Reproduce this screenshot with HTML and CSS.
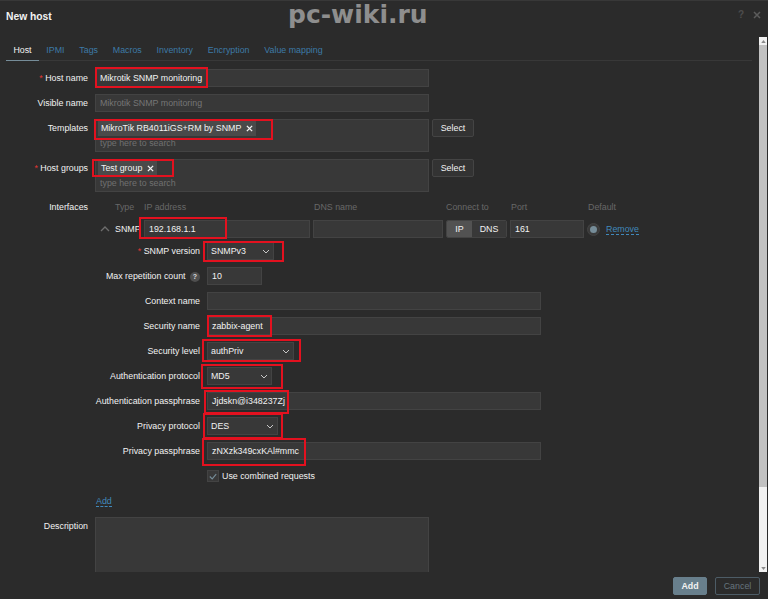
FILE: index.html
```html
<!DOCTYPE html>
<html lang="en">
<head>
<meta charset="utf-8">
<title>New host</title>
<link rel="stylesheet" href="styles.css">
</head>
<body>
<div class="dialog">
  <header class="dialog-head">
    <h1 class="title">New host</h1>
    <div class="head-icons">
      <span class="help">?</span>
      <svg class="close" viewBox="0 0 8 8" width="8" height="8"><path d="M1 1l6 6M7 1L1 7"/></svg>
    </div>
  </header>
  <div class="watermark">pc-wiki.ru</div>

  <div class="middle">
    <main class="scroll-view">
      <nav class="tabs">
        <a class="tab active">Host</a>
        <a class="tab">IPMI</a>
        <a class="tab">Tags</a>
        <a class="tab">Macros</a>
        <a class="tab">Inventory</a>
        <a class="tab">Encryption</a>
        <a class="tab">Value mapping</a>
      </nav>

      <div class="form">
        <label class="label"><i class="req">*</i> Host name</label>
        <div class="value"><div class="input w-main">Mikrotik SNMP monitoring</div></div>

        <label class="label">Visible name</label>
        <div class="value"><div class="input w-main muted">Mikrotik SNMP monitoring</div></div>

        <label class="label">Templates</label>
        <div class="value row-select">
          <div class="multi">
            <span class="chip">MikroTik RB4011iGS+RM by SNMP
              <svg class="chip-x" viewBox="0 0 8 8" width="7" height="7"><path d="M1 1l6 6M7 1L1 7"/></svg>
            </span>
            <div class="placeholder">type here to search</div>
          </div>
          <button class="btn-select">Select</button>
        </div>

        <label class="label"><i class="req">*</i> Host groups</label>
        <div class="value row-select">
          <div class="multi">
            <span class="chip">Test group
              <svg class="chip-x" viewBox="0 0 8 8" width="7" height="7"><path d="M1 1l6 6M7 1L1 7"/></svg>
            </span>
            <div class="placeholder">type here to search</div>
          </div>
          <button class="btn-select">Select</button>
        </div>

        <label class="label label-interfaces">Interfaces</label>
        <div class="value interfaces">
          <div class="if-grid if-head">
            <span></span>
            <span>Type</span>
            <span>IP address</span>
            <span class="nudge">DNS name</span>
            <span>Connect to</span>
            <span class="nudge">Port</span>
            <span class="nudge">Default</span>
          </div>
          <div class="if-grid if-row">
            <svg class="chev-up" viewBox="0 0 10 6" width="10" height="6"><path d="M1 5l4-4 4 4"/></svg>
            <span class="if-type">SNMP</span>
            <div class="input">192.168.1.1</div>
            <div class="input"></div>
            <div class="toggle"><span class="toggle-on">IP</span><span class="toggle-off">DNS</span></div>
            <div class="input">161</div>
            <div class="default-cell">
              <span class="radio"><span class="radio-dot"></span></span>
              <a class="link">Remove</a>
            </div>
          </div>

          <div class="subform">
            <label class="label"><i class="req">*</i> SNMP version</label>
            <div class="select w-67">SNMPv3<svg class="chev" viewBox="0 0 8 5" width="8" height="5"><path d="M1 1l3 3 3-3"/></svg></div>

            <label class="label">Max repetition count <span class="hint">?</span></label>
            <div class="input w-55">10</div>

            <label class="label">Context name</label>
            <div class="input w-wide"></div>

            <label class="label">Security name</label>
            <div class="input w-wide">zabbix-agent</div>

            <label class="label">Security level</label>
            <div class="select w-87">authPriv<svg class="chev" viewBox="0 0 8 5" width="8" height="5"><path d="M1 1l3 3 3-3"/></svg></div>

            <label class="label">Authentication protocol</label>
            <div class="select w-65">MD5<svg class="chev" viewBox="0 0 8 5" width="8" height="5"><path d="M1 1l3 3 3-3"/></svg></div>

            <label class="label">Authentication passphrase</label>
            <div class="input w-wide">Jjdskn@i348237Zj</div>

            <label class="label">Privacy protocol</label>
            <div class="select w-71">DES<svg class="chev" viewBox="0 0 8 5" width="8" height="5"><path d="M1 1l3 3 3-3"/></svg></div>

            <label class="label">Privacy passphrase</label>
            <div class="input w-wide">zNXzk349cxKAl#mmc</div>

            <span></span>
            <div class="check-row">
              <span class="check"><svg viewBox="0 0 10 8" width="8" height="7"><path d="M1 4l3 3 5-6"/></svg></span>
              <span>Use combined requests</span>
            </div>
          </div>

          <div class="add-row"><a class="link">Add</a></div>
        </div>

        <label class="label">Description</label>
        <div class="value"><div class="textarea w-main"></div></div>
      </div>
    </main>

    <div class="scrollbar">
      <div class="sb-arrow"><svg viewBox="0 0 6 4" width="5" height="3"><path class="sb-tri" d="M3 0l3 4H0z"/></svg></div>
      <div class="sb-thumb"></div>
      <div class="sb-track"></div>
      <div class="sb-arrow"><svg viewBox="0 0 6 4" width="5" height="3"><path class="sb-tri" d="M0 0h6L3 4z"/></svg></div>
    </div>
  </div>

  <footer class="dialog-foot">
    <button class="btn-add">Add</button>
    <button class="btn-cancel">Cancel</button>
  </footer>

  <div class="mark m-hostname"></div>
  <div class="mark m-templates"></div>
  <div class="mark m-groups"></div>
  <div class="mark m-ip"></div>
  <div class="mark m-version"></div>
  <div class="mark m-secname"></div>
  <div class="mark m-seclevel"></div>
  <div class="mark m-authproto"></div>
  <div class="mark m-authpass"></div>
  <div class="mark m-privproto"></div>
  <div class="mark m-privpass"></div>
</div>
</body>
</html>
```

FILE: styles.css
```css
* { box-sizing: border-box; }
html, body { margin: 0; padding: 0; background: #2b2b2b; }
body { font: 8.85px/18px "Liberation Sans", Arial, sans-serif; color: #f2f2f2; }

.dialog {
  position: relative;
  width: 768px;
  height: 599px;
  overflow: hidden;
  display: flex;
  flex-direction: column;
  background: #2b2b2b;
  border-top: 1px solid #383838;
}

.dialog-head {
  flex: 0 0 36px;
  display: flex;
  justify-content: space-between;
  padding: 6px 7px 0 6px;
}
.title { margin: 1px 0 0; font-size: 10.3px; line-height: 18px; font-weight: bold; color: #f2f2f2; }
.head-icons { display: flex; align-items: center; gap: 9px; height: 8px; padding-top: 8px; }
.help { font-size: 10px; font-weight: bold; color: #4d4d4d; line-height: 8px; }
.close { stroke: #5c5c5c; stroke-width: 1.5; fill: none; }

.watermark {
  position: absolute;
  left: 288px;
  top: -1px;
  font: bold 25px/30px "DejaVu Sans", sans-serif;
  color: #8e8e8e;
}

.middle { flex: 1; display: flex; min-height: 0; }
.scroll-view { flex: 1; min-width: 0; overflow: hidden; }

.tabs {
  display: flex;
  height: 24px;
  margin: 0 7px 8px 6px;
  border-bottom: 1px solid #383838;
}
.tab { padding: 4px 7.4px 0; color: #3d7aa6; height: 24px; line-height: 18px; white-space: nowrap; }
.tab.active { color: #f2f2f2; border-bottom: 1px solid #768d99; }

.form {
  display: grid;
  grid-template-columns: 82px 1fr;
  column-gap: 7px;
  row-gap: 7px;
  padding-left: 6px;
}
.label { text-align: right; white-space: nowrap; color: #f2f2f2; line-height: 18px; }
.req { font-style: normal; color: #e33734; }
.label-interfaces { line-height: 16px; }

.input, .select, .multi, .textarea {
  background: #383838;
  border: 1px solid #434343;
  color: #f2f2f2;
}
.input { height: 18px; padding: 0 4px; line-height: 16px; white-space: nowrap; overflow: hidden; }
.muted { color: #767676; }
.w-main { width: 334px; }
.w-wide { width: 334px; }
.w-55 { width: 55px; }

.select {
  height: 18px;
  display: flex;
  align-items: center;
  justify-content: space-between;
  padding: 0 3px 0 3px;
  line-height: 16px;
}
.w-65 { width: 65px; }
.w-67 { width: 67px; }
.w-71 { width: 71px; }
.w-87 { width: 87px; }
.chev { fill: none; stroke: #c8c8c8; stroke-width: 1; }

.row-select { display: flex; gap: 3px; align-items: flex-start; }
.multi { width: 334px; height: 33px; padding: 1px 2px; }
.chip {
  display: flex;
  width: fit-content;
  align-items: center;
  gap: 5px;
  height: 15px;
  padding: 0 3px;
  background: #4a4a4a;
  line-height: 15px;
}
.chip-x { stroke: #f2f2f2; stroke-width: 1.6; fill: none; }
.placeholder { color: #707070; line-height: 15px; padding-left: 2px; }
.btn-select {
  width: 42px;
  height: 18px;
  padding: 0;
  background: #333;
  border: 1px solid #444;
  border-radius: 2px;
  color: #f2f2f2;
  font: inherit;
  line-height: 16px;
}

.if-grid {
  display: grid;
  grid-template-columns: 17px 26px 166px 130px 61px 74px 1fr;
  column-gap: 3px;
}
.if-head { height: 16px; line-height: 16px; margin-bottom: 5px; color: #686868; }
.nudge { padding-left: 1px; }
.if-row { align-items: center; height: 18px; }
.chev-up { fill: none; stroke: #6e6e6e; stroke-width: 1.3; margin-left: 5px; }
.if-type { white-space: nowrap; color: #f2f2f2; }
.toggle {
  display: flex;
  height: 18px;
  border: 1px solid #434343;
  border-radius: 2px;
  overflow: hidden;
  line-height: 16px;
  text-align: center;
}
.toggle-on { flex: 0 0 25px; background: #525252; }
.toggle-off { flex: 1; background: #383838; }
.default-cell { display: flex; align-items: center; gap: 6px; }
.radio {
  width: 13px;
  height: 13px;
  border-radius: 50%;
  background: #3a3a3a;
  border: 1px solid #434343;
  display: flex;
  align-items: center;
  justify-content: center;
}
.radio-dot { width: 7px; height: 7px; border-radius: 50%; background: #768d99; }
.link { color: #4189bb; border-bottom: 1px dashed #4189bb; line-height: 10px; }

.subform {
  display: grid;
  grid-template-columns: 105px 1fr;
  column-gap: 7px;
  row-gap: 7px;
  justify-items: start;
  margin-top: 4px;
}
.subform .label { justify-self: end; }
.hint {
  display: inline-block;
  width: 10px;
  height: 10px;
  margin-left: 2px;
  border-radius: 50%;
  background: #4f4f4f;
  color: #ddd;
  font-size: 7px;
  font-weight: bold;
  line-height: 10px;
  text-align: center;
}
.check-row { display: flex; align-items: center; gap: 3px; height: 18px; }
.check {
  width: 12px;
  height: 12px;
  display: flex;
  align-items: center;
  justify-content: center;
  background: #383838;
  border: 1px solid #434343;
}
.check svg { fill: none; stroke: #768d99; stroke-width: 1.4; }
.add-row { height: 18px; margin-top: 7px; padding-left: 1px; }

.textarea { height: 62px; border-bottom: 0; }

.scrollbar {
  flex: 0 0 8px;
  margin-right: 1px;
  display: flex;
  flex-direction: column;
  background: #f1f1f1;
}
.sb-arrow { flex: 0 0 8px; display: flex; align-items: center; justify-content: center; }
.sb-tri { fill: #8a8a8a; }
.sb-thumb { flex: 0 0 442px; background: #c1c1c1; }
.sb-track { flex: 1; }

.dialog-foot {
  flex: 0 0 27px;
  display: flex;
  justify-content: flex-end;
  gap: 8px;
  padding: 5px 8px 0 0;
}
.btn-add, .btn-cancel { height: 18px; padding: 0; font: inherit; line-height: 16px; border-radius: 2px; }
.btn-add { width: 34px; background: #687f8c; border: 1px solid #687f8c; color: #f2f2f2; font-weight: bold; }
.btn-cancel { width: 45px; background: transparent; border: 1px solid #4d5c66; color: #66747d; }

.mark { position: absolute; border: 2px solid #e3111f; pointer-events: none; }
.m-hostname { left: 95px; top: 66px; width: 113px; height: 21px; }
.m-templates { left: 94px; top: 118px; width: 179px; height: 21px; }
.m-groups { left: 92px; top: 158px; width: 82px; height: 18px; }
.m-ip { left: 139px; top: 216px; width: 88px; height: 22px; }
.m-version { left: 203px; top: 240px; width: 81px; height: 21px; }
.m-secname { left: 207px; top: 314px; width: 65px; height: 22px; }
.m-seclevel { left: 202px; top: 338px; width: 99px; height: 23px; }
.m-authproto { left: 201px; top: 363px; width: 82px; height: 25px; }
.m-authpass { left: 204px; top: 389px; width: 85px; height: 24px; }
.m-privproto { left: 203px; top: 412px; width: 80px; height: 26px; }
.m-privpass { left: 202px; top: 437px; width: 104px; height: 28px; }
```
